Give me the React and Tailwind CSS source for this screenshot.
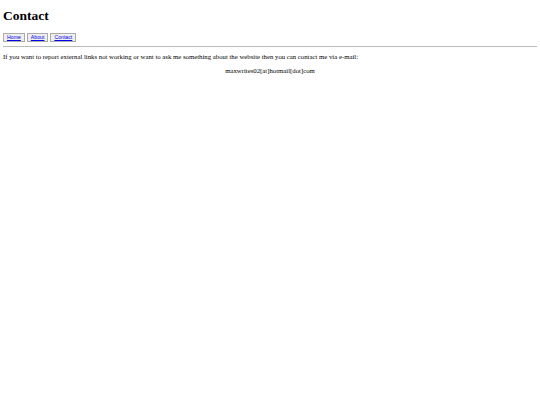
export default function App() {
  return (
    <div className="min-h-[405px] bg-white px-[3px] pt-[1px] text-black" style={{ fontFamily: '"Liberation Serif", "Times New Roman", serif' }}>
      <h1 className="mt-[7px] text-[13.5px] font-bold leading-[16px]">Contact</h1>
      <div className="mt-[9px] flex gap-[2px]">
        {["Home", "About", "Contact"].map((l) => (
          <span
            key={l}
            className="flex h-[9px] items-center border border-[#aaa] bg-[#efefef] px-[3px] text-[5.2px] leading-none text-[#00e] underline"
            style={{ fontFamily: '"Liberation Sans", Arial, sans-serif' }}
          >
            {l}
          </span>
        ))}
      </div>
      <hr className="mt-[4px] border-t border-[#bbb]" />
      <p className="mt-[6px] text-[6.75px] leading-[8px]">
        If you want to report external links not working or want to ask me something about the website then you can contact me via e-mail:
      </p>
      <p className="mt-[6px] text-center text-[6.75px] leading-[8px]">maxwrites02[at]hotmail[dot]com</p>
    </div>
  );
}
